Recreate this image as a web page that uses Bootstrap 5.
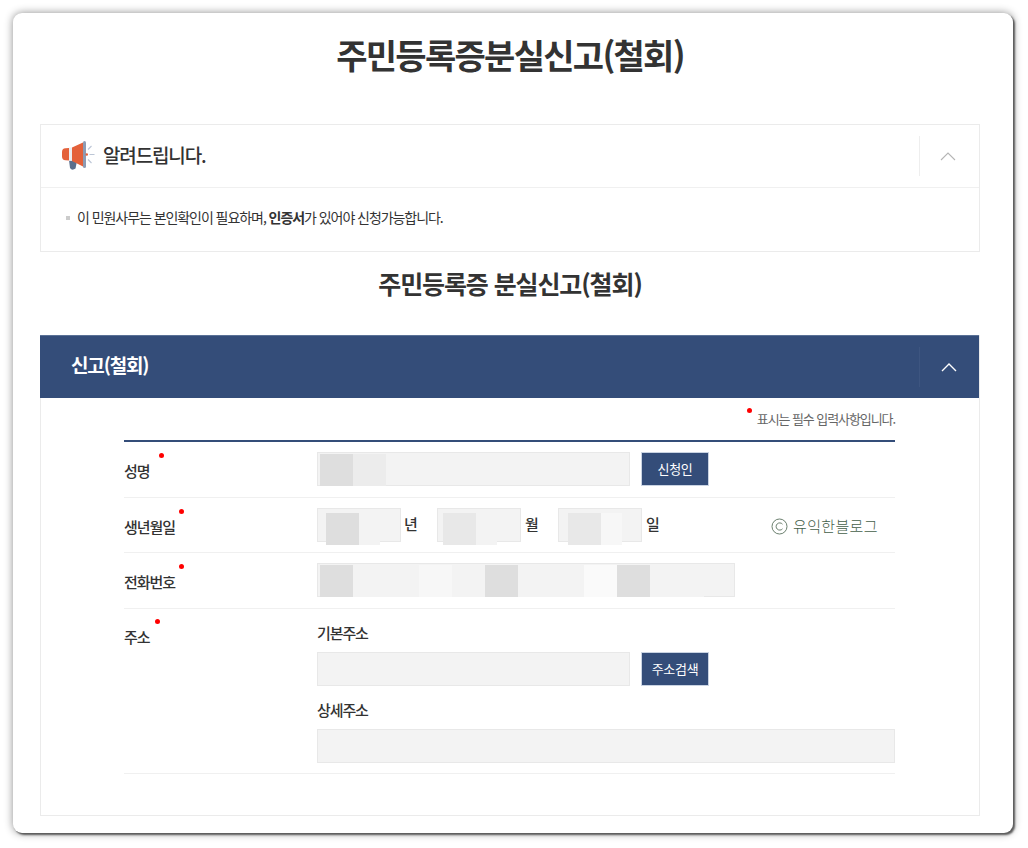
<!DOCTYPE html>
<html lang="ko">
<head>
<meta charset="utf-8">
<title>주민등록증분실신고(철회)</title>
<link href="https://cdn.jsdelivr.net/npm/bootstrap@5.3.0/dist/css/bootstrap.min.css" rel="stylesheet">
<style>
html,body{height:100%}
body{background:#fff;font-family:"Noto Sans CJK KR","Noto Sans",sans-serif;color:#333;padding:13px 15px 15px 13px;overflow:hidden}
.frame{width:1000px;height:820px;background:#fff;border-radius:9px;padding:17px 33px 16px 27px;box-shadow:2px 2px 2px #5f5f5f,1px 1px 0 #777,0 0 8px rgba(0,0,0,.45)}
.ttl{font-size:34px;font-weight:700;letter-spacing:-1.7px;line-height:50px;margin:0;height:94px;text-align:center;color:#333}
.notice,.panel{border:1px solid #ebebeb;border-radius:0;width:940px}
.nhead{height:63px;border-bottom:1px solid #f0f0f0;padding-left:20px}
.ntitle{font-size:19px;font-weight:500;letter-spacing:-1.15px;margin:0 0 2px 8px;color:#333}
.sep{width:1px;height:40px;background:#eee}
.foldbox{width:60px;height:100%}
.chev{margin-left:auto;margin-right:23px}
.phead .chev{margin-right:22px}
.nbody{height:63px;padding-left:25px;font-size:14px;letter-spacing:-1.06px;color:#333}
.nbody b{font-weight:700}
.sq{width:4px;height:4px;background:#ccc;margin-right:7px}
.subt{font-size:25px;font-weight:700;letter-spacing:-1.1px;line-height:36px;height:83px;padding-top:13px;text-align:center;margin:0;color:#333}
.panel{height:481px}
.phead{height:63px;background:#344d79;color:#fff;padding-left:31px;margin:-1px 0 0 -1px;border-top:1px solid #5a7196}
.phead .sep{background:#3d5580}
.ptitle{font-size:19px;font-weight:700;letter-spacing:-1.15px;margin-bottom:4px}
.formwrap{padding:0 84px 0 83px}
.reqnote{height:44px;font-size:13px;letter-spacing:-1.08px;color:#666;padding-top:12px;border-bottom:2px solid #344d79;text-align:right;line-height:18px}
.reqnote span{position:relative}
.dot{position:absolute;width:5px;height:5px;border-radius:50%;background:#f00}
.reqnote .dot{left:-10px;top:-1px}
.frow{border-bottom:1px solid #f0f0f0}
.r1{height:56px;padding-top:10px}
.r2{height:55px;padding-top:10px}
.r3{height:56px;padding-top:10px}
.r4{height:165px;padding-top:11px}
.lab{width:193px;font-size:15px;font-weight:500;letter-spacing:-1.05px;color:#333;flex:none}
.labtxt{position:relative;display:inline-block;line-height:22px;margin-top:8px}
.r4 .labtxt{margin-top:6px}
.labtxt .dot{left:calc(100% + 4px);top:-7px}
.r1 .labtxt .dot{left:calc(100% + 9px);top:-7px}
.r4 .labtxt .dot{left:calc(100% + 5px)}
.fld{height:34px;background:#f3f3f3;border:1px solid #e8e8e8;flex:none;display:flex;align-items:flex-start}
.w313{width:313px}.w84{width:84px}.w418{width:418px}.w578{width:578px}
.fill1{padding:1px 0 0 2px}
.ymd{padding-left:8px}
.ymd.near{padding-left:5px}
.ymd.far{padding-left:9px}
.ymd i{margin-top:4px}
.fld i{display:block;height:32px;flex:none}
.a33{width:33px}.a21{width:21px}.a66{width:66px}.a54{width:54px}
.c1{background:#dedede}.c2{background:#ececec}.c3{background:#f3f3f3}.c4{background:#f7f7f7}.c5{background:#e8e8e8}.c6{background:#fafafa}
.unit{font-size:15px;font-weight:500;width:36px;padding-left:3px;line-height:32px;color:#333;flex:none}
.unit.wide{width:37px;padding-left:4px}
.gbtn{width:68px;height:34px;background:#344d79;border:1px solid #c9d3e2;border-radius:0;color:#fff;font-size:13px;padding:0;margin-left:11px;letter-spacing:-.3px;line-height:30px}
.gbtn:hover{background:#344d79;color:#fff}
.wmark{font-size:15px;font-weight:300;color:#45604a;margin-left:92px;line-height:36px;letter-spacing:.35px}
.wmark svg{margin-right:5px;vertical-align:-3px}
.sublab{font-size:15px;font-weight:500;letter-spacing:-1.1px;line-height:22px;color:#333}
.sl1{margin-bottom:8px;margin-top:2px}
.sl2{margin:13px 0 8px}
</style>
</head>
<body>
<div class="frame">
  <h1 class="ttl">주민등록증분실신고(철회)</h1>
  <div class="card notice">
    <div class="nhead d-flex align-items-center">
      <svg width="34" height="30" viewBox="0 0 34 30" aria-hidden="true">
        <path d="M8 19l8 1-1.500 7.500q-3.500 2.500-5.500-.5z" fill="#5c6f8c"/>
        <path d="M1 11q0-3.500 3.500-3.800L8 7v12.500l-3.500-.3Q1 19 1 15.500z" fill="#e4613a"/>
        <rect x="8" y="6.600" width="3" height="13.300" fill="#eceef2"/>
        <path d="M11 6.500L22 1.500v24L11 20z" fill="#e4613a"/>
        <rect x="22" y="0" width="3" height="27" rx="1.500" fill="#8d9bb3"/>
        <path d="M28.500 13.500h5M27 8.500l3.500-3.500M27 18.500l3.500 3.500" stroke="#bcc6d6" stroke-width="1.100" fill="none"/>
        <circle cx="25.800" cy="13.500" r="1.200" fill="#e4613a"/>
      </svg>
      <span class="ntitle">알려드립니다.</span>
      <div class="ms-auto d-flex align-items-center foldbox">
        <div class="sep"></div>
        <svg class="chev" width="16" height="10" viewBox="0 0 16 10" aria-hidden="true"><path d="M1 9l7-7 7 7" fill="none" stroke="#b5b5b5" stroke-width="1.100"/></svg>
      </div>
    </div>
    <div class="nbody d-flex align-items-center pb-1"><span class="sq"></span><span>이 민원사무는 본인확인이 필요하며, <b>인증서</b>가 있어야 신청가능합니다.</span></div>
  </div>
  <h2 class="subt">주민등록증 분실신고(철회)</h2>
  <div class="card panel">
    <div class="phead d-flex align-items-center">
      <span class="ptitle">신고(철회)</span>
      <div class="ms-auto d-flex align-items-center foldbox">
        <div class="sep"></div>
        <svg class="chev" width="16" height="10" viewBox="0 0 16 10" aria-hidden="true"><path d="M1 9l7-7 7 7" fill="none" stroke="#fff" stroke-width="1.400"/></svg>
      </div>
    </div>
    <div class="formwrap">
      <div class="reqnote"><span><em class="dot"></em>표시는 필수 입력사항입니다.</span></div>
      <div class="frow r1 d-flex">
        <div class="lab"><span class="labtxt">성명<em class="dot"></em></span></div>
        <div class="fld w313 fill1"><i class="a33 c1"></i><i class="a33 c2"></i></div>
        <button type="button" class="btn gbtn">신청인</button>
      </div>
      <div class="frow r2 d-flex">
        <div class="lab"><span class="labtxt">생년월일<em class="dot"></em></span></div>
        <div class="fld w84 ymd"><i class="a33 c1"></i><i class="a21 c3"></i></div><span class="unit">년</span>
        <div class="fld w84 ymd near"><i class="a33 c5"></i><i class="a21 c3"></i></div><span class="unit wide">월</span>
        <div class="fld w84 ymd far"><i class="a33 c5"></i><i class="a21 c4"></i></div><span class="unit wide">일</span>
        <span class="wmark"><svg width="17" height="17" viewBox="0 0 17 17" aria-hidden="true"><circle cx="8.500" cy="8.500" r="7.500" fill="none" stroke="#45604a" stroke-width=".8"/><path d="M11.500 6.200a3.600 3.600 0 1 0 0 4.600" fill="none" stroke="#45604a" stroke-width=".8"/></svg>유익한블로그</span>
      </div>
      <div class="frow r3 d-flex">
        <div class="lab"><span class="labtxt">전화번호<em class="dot"></em></span></div>
        <div class="fld w418 fill1"><i class="a33 c1"></i><i class="a66 c3"></i><i class="a33 c4"></i><i class="a33 c3"></i><i class="a33 c1"></i><i class="a66 c3"></i><i class="a33 c6"></i><i class="a33 c1"></i><i class="a54 c3"></i></div>
      </div>
      <div class="frow r4 d-flex">
        <div class="lab"><span class="labtxt">주소<em class="dot"></em></span></div>
        <div>
          <div class="sublab sl1">기본주소</div>
          <div class="d-flex"><div class="fld w313"></div><button type="button" class="btn gbtn">주소검색</button></div>
          <div class="sublab sl2">상세주소</div>
          <div class="fld w578"></div>
        </div>
      </div>
    </div>
  </div>
</div>
<script src="https://cdn.jsdelivr.net/npm/bootstrap@5.3.0/dist/js/bootstrap.bundle.min.js"></script>
</body>
</html>
